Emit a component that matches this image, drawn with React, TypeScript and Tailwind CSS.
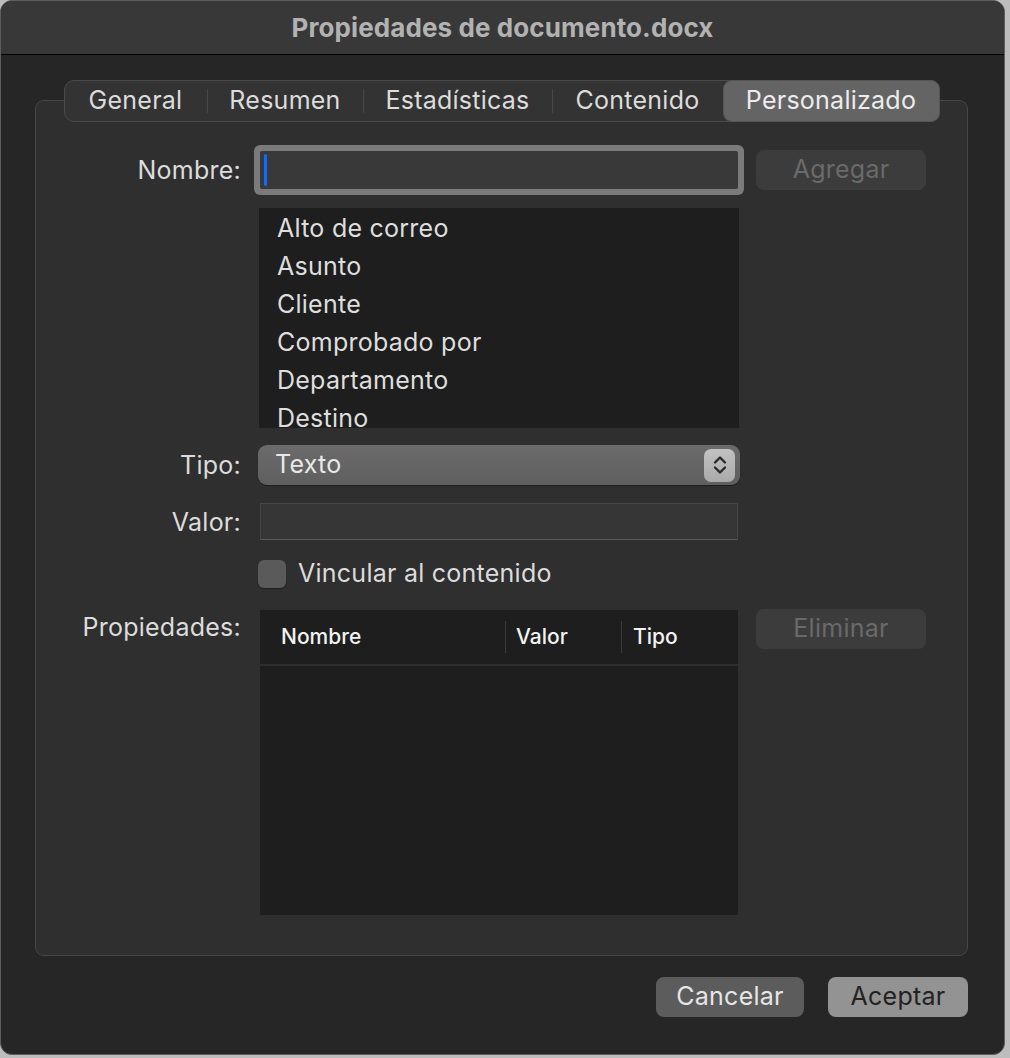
import React from "react";

const tabs = ["General", "Resumen", "Estadísticas", "Contenido", "Personalizado"];

const props = ["Alto de correo", "Asunto", "Cliente", "Comprobado por", "Departamento", "Destino"];

function Label({ children }: { children: React.ReactNode }) {
  return (
    <div className="w-[205px] shrink-0 text-right text-[25px] tracking-[0.25px] text-[#dcdcdc] leading-[30px]">
      {children}
    </div>
  );
}

function Stepper() {
  return (
    <div className="w-[31px] h-[33px] rounded-[7px] bg-gradient-to-b from-[#c2c2c2] to-[#aaaaaa] flex items-center justify-center">
      <svg width="18" height="24" viewBox="0 0 18 24" fill="none">
        <path d="M4 9.5 L9 4.5 L14 9.5" stroke="#2a2a2a" strokeWidth="2.4" strokeLinecap="round" strokeLinejoin="round" />
        <path d="M4 14.5 L9 19.5 L14 14.5" stroke="#2a2a2a" strokeWidth="2.4" strokeLinecap="round" strokeLinejoin="round" />
      </svg>
    </div>
  );
}

export default function App() {
  return (
    <div className="w-[1010px] h-[1058px] bg-[#bdbdbd] font-['Inter','Liberation_Sans',sans-serif]">
      <div className="w-[1005px] h-[1055px] rounded-[12px] border border-[#5e5e5e] bg-[#262626] overflow-hidden flex flex-col">
        {/* title bar */}
        <div className="h-[54px] shrink-0 bg-[#383838] border-b border-black flex items-center justify-center">
          <span className="text-[26px] font-bold text-[#b2b2b2] tracking-[0.1px]">Propiedades de documento.docx</span>
        </div>

        <div className="pl-[34px] pr-[36px] pt-[25px]">
          {/* tabs */}
          <div className="relative z-10 mx-auto w-[876px] h-[42px] rounded-[10px] border border-[#4a4a4a] bg-[#333333] flex items-center">
            {tabs.map((t, i) => {
              const active = i === tabs.length - 1;
              const nextActive = i === tabs.length - 2;
              return (
                <React.Fragment key={t}>
                  <div
                    className={
                      active
                        ? "h-[42px] -mr-px flex-1 flex items-center justify-center rounded-[9px] bg-[#646464] border border-[#555] text-[25px] tracking-[0.25px] text-[#ececec]"
                        : "h-full flex items-center justify-center text-[25px] tracking-[0.25px] text-[#dcdcdc] " +
                          (i === 0 ? "w-[142px]" : i === 1 ? "w-[155px]" : i === 2 ? "w-[188px]" : "w-[170px]")
                    }
                  >
                    {t}
                  </div>
                  {!active && !nextActive && <div className="w-px h-[24px] bg-[#474747]" />}
                </React.Fragment>
              );
            })}
          </div>

          {/* group box */}
          <div className="-mt-[22px] h-[856px] rounded-[9px] border border-[#474747] bg-[#2f2f2f] pt-[50px]">
            {/* Nombre */}
            <div className="flex items-center h-[38px]">
              <Label>Nombre:</Label>
              <div className="ml-[19px] w-[478px] h-[38px] bg-[#393939] rounded-[2px] shadow-[0_0_0_6px_#7b7b7b] pl-[4px] flex items-center">
                <div className="w-[3px] h-[32px] rounded-full bg-[#0a6dff]" />
              </div>
              <div className="ml-[18px] w-[170px] h-[40px] rounded-[8px] bg-[#3c3c3c] flex items-center justify-center text-[25px] tracking-[0.25px] text-[#6a6a6a]">
                Agregar
              </div>
            </div>

            {/* list */}
            <div className="flex mt-[19px]">
              <div className="w-[205px] shrink-0" />
              <div className="ml-[18px] w-[480px] h-[220px] bg-[#1e1e1e] overflow-hidden pt-[1px] pl-[18px]">
                {props.map((p) => (
                  <div key={p} className="h-[38px] leading-[38px] text-[25px] tracking-[0.25px] text-[#dedede]">
                    {p}
                  </div>
                ))}
              </div>
            </div>

            {/* Tipo */}
            <div className="flex items-center mt-[17px] h-[40px]">
              <Label>Tipo:</Label>
              <div className="ml-[17px] w-[482px] h-[40px] rounded-[9px] bg-gradient-to-b from-[#6b6b6b] to-[#5f5f5f] shadow-[0_1px_1px_rgba(0,0,0,0.4)] flex items-center justify-between pl-[17px] pr-[5px]">
                <span className="text-[25px] tracking-[0.25px] text-[#e8e8e8]">Texto</span>
                <Stepper />
              </div>
            </div>

            {/* Valor */}
            <div className="flex items-center mt-[18px] h-[37px]">
              <Label>Valor:</Label>
              <div className="ml-[19px] w-[478px] h-[37px] bg-[#363636] border border-[#454545] border-b-[#5a5a5a]" />
            </div>

            {/* checkbox */}
            <div className="flex items-center mt-[20px] h-[28px]">
              <div className="w-[205px] shrink-0" />
              <div className="ml-[17px] w-[28px] h-[28px] rounded-[6px] bg-[#5a5a5a] shadow-[0_1px_1px_rgba(0,0,0,0.35)]" />
              <span className="ml-[12px] text-[25px] tracking-[0.25px] text-[#dcdcdc]">Vincular al contenido</span>
            </div>

            {/* Propiedades */}
            <div className="flex mt-[22px]">
              <div className="pt-[2px]">
                <Label>Propiedades:</Label>
              </div>
              <div className="ml-[19px] w-[478px] h-[305px] bg-[#1e1e1e] flex flex-col">
                <div className="h-[56px] flex items-center border-b-2 border-[#2e2e2e] text-[21px] font-medium text-[#f2f2f2]">
                  <div className="w-[245px] pl-[21px]">Nombre</div>
                  <div className="w-px h-[32px] bg-[#3c3c3c]" />
                  <div className="w-[115px] pl-[10px]">Valor</div>
                  <div className="w-px h-[32px] bg-[#3c3c3c]" />
                  <div className="pl-[11px]">Tipo</div>
                </div>
              </div>
              <div className="ml-[18px] -mt-px w-[170px] h-[40px] rounded-[8px] bg-[#3c3c3c] flex items-center justify-center text-[25px] tracking-[0.25px] text-[#6a6a6a]">
                Eliminar
              </div>
            </div>
          </div>

          {/* footer */}
          <div className="mt-[21px] flex justify-end gap-[24px]">
            <div className="w-[148px] h-[40px] rounded-[8px] bg-[#5c5c5c] flex items-center justify-center text-[25px] tracking-[0.25px] text-[#e6e6e6]">
              Cancelar
            </div>
            <div className="w-[140px] h-[40px] rounded-[8px] bg-[#939393] flex items-center justify-center text-[25px] tracking-[0.25px] text-[#222222]">
              Aceptar
            </div>
          </div>
        </div>
      </div>
    </div>
  );
}
